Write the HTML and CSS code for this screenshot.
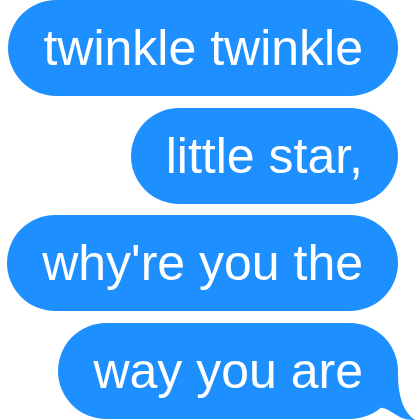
FILE: index.html
```html
<!DOCTYPE html>
<html>
<head>
<meta charset="utf-8">
<link rel="stylesheet" href="styles.css">
</head>
<body>
<div class="thread">
  <div class="bubble">twinkle twinkle</div>
  <div class="bubble">little star,</div>
  <div class="bubble">why're you the</div>
  <div class="bubble last">way you are
    <svg class="tail" viewBox="0 0 40 45" width="40" height="45"><path d="M0 0 H20 C20 22 26 38 37 45 C30 45 26 44 22 42 C15 38 8 33 4 33 L0 30 Z" fill="#1e8fff"/></svg>
  </div>
</div>
</body>
</html>
```
FILE: styles.css
```css
html, body {
  margin: 0;
  padding: 0;
  background: #ffffff;
}
.thread {
  width: 420px;
  height: 420px;
  overflow: hidden;
  box-sizing: border-box;
  display: flex;
  flex-direction: column;
  align-items: flex-end;
  gap: 11.7px;
  padding-right: 22px;
}
.bubble {
  position: relative;
  height: 96px;
  line-height: 96px;
  border-radius: 48px;
  padding: 0 35px;
  background: #1e8fff;
  color: #ffffff;
  font-family: "Liberation Sans", Arial, sans-serif;
  font-size: 50px;
  white-space: nowrap;
}
.tail {
  position: absolute;
  right: -20px;
  bottom: -1px;
  display: block;
}
```
